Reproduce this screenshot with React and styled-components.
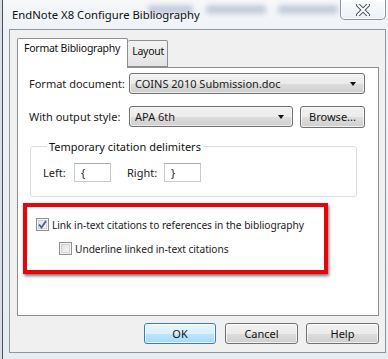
import React from 'react';
import styled, { createGlobalStyle } from 'styled-components';

const GlobalStyle = createGlobalStyle`
  html, body {
    margin: 0;
    padding: 0;
    width: 388px;
    height: 359px;
    overflow: hidden;
    background: #d9dee4;
  }
  * {
    box-sizing: border-box;
  }
`;

const Window = styled.div`
  position: relative;
  width: 388px;
  height: 359px;
  margin-left: 2px;
  border-left: 1px solid #4a4f56;
  background: linear-gradient(to bottom, #f6f8fa 0px, #eef2f6 30px, #e7ecf1 100%);
  font-family: 'Noto Sans', 'Open Sans', sans-serif;
  font-size: 11px;
  color: #1b1b1b;
  white-space: nowrap;
  display: flex;
  flex-direction: column;
`;

const TitleBar = styled.div`
  position: relative;
  height: 28px;
  display: flex;
  align-items: center;
  padding-left: 9px;
`;

// blurred desktop showing through the glass frame
const Smudge = styled.span`
  position: absolute;
  top: ${({ $t }) => $t}px;
  left: ${({ $l }) => $l}px;
  width: ${({ $w }) => $w}px;
  height: 9px;
  border-radius: 3px;
  background: #6f82a8;
  opacity: 0.35;
  filter: blur(2.5px);
`;

const Title = styled.span`
  position: relative;
  font-size: 11.3px;
  color: #111;
`;

const CloseButton = styled.div`
  position: absolute;
  top: 0;
  right: 4px;
  width: 46px;
  height: 20px;
  border: 1px solid #8c949e;
  border-top: none;
  border-radius: 0 0 5px 5px;
  background: linear-gradient(to bottom, rgba(255,255,255,0.5), rgba(235,239,244,0.8));
  box-shadow: inset 0 0 0 1px rgba(255,255,255,0.7);
  display: flex;
  align-items: center;
  justify-content: center;
`;

const Content = styled.div`
  margin: 1px 4px 0 6px;
  height: 324px;
  border: 1px solid #8e98a3;
  background: #f0f0f0;
  padding: 8px 6px 0 7px;
  display: flex;
  flex-direction: column;
`;

const TabRow = styled.div`
  display: flex;
  align-items: flex-end;
  height: 29px;
  position: relative;
  z-index: 1;
`;

const Tab = styled.div`
  height: ${({ $active }) => ($active ? '30px' : '27px')};
  margin-bottom: ${({ $active }) => ($active ? '-1px' : '0')};
  padding: ${({ $active }) => ($active ? '2px 7px 0 6px' : '3px 3px 0 4px')};
  border: 1px solid #8c8e94;
  border-bottom: ${({ $active }) => ($active ? 'none' : '1px solid #8c8e94')};
  border-left: ${({ $active }) => ($active ? '1px solid #8c8e94' : 'none')};
  border-radius: 2px 2px 0 0;
  background: ${({ $active }) =>
    $active ? '#ffffff' : 'linear-gradient(to bottom, #f3f3f3, #e3e3e3)'};
  font-size: 10.5px;
  letter-spacing: -0.25px;
  color: #111;
`;

const Pane = styled.div`
  height: 249px;
  border: 1px solid #8c8e94;
  background: #ffffff;
  padding: 5px 11px 0 11px;
  display: flex;
  flex-direction: column;
`;

const FieldRow = styled.div`
  display: flex;
  align-items: center;
  height: 21px;
  margin-bottom: ${({ $gap }) => $gap || 0}px;
`;

const Label = styled.span`
  width: 100px;
  flex-shrink: 0;
`;

const Combo = styled.div`
  width: ${({ $w }) => $w}px;
  height: ${({ $h }) => $h || 21}px;
  border: 1px solid #707070;
  border-radius: 3px;
  background: linear-gradient(to bottom, #f2f2f2 0%, #ebebeb 50%, #dddddd 51%, #cfcfcf 100%);
  box-shadow: inset 0 0 0 1px rgba(255, 255, 255, 0.6);
  display: flex;
  align-items: center;
  justify-content: space-between;
  padding: 0 8px 0 5px;
`;

const Arrow = styled.span`
  width: 0;
  height: 0;
  border-left: 3.5px solid transparent;
  border-right: 3.5px solid transparent;
  border-top: 4px solid #111;
`;

const Button = styled.div`
  width: ${({ $w }) => $w}px;
  height: ${({ $h }) => $h || 21}px;
  margin-left: ${({ $ml }) => $ml || 0}px;
  border: 1px solid ${({ $focus }) => ($focus ? '#3c7fb1' : '#707070')};
  border-radius: 3px;
  background: ${({ $focus }) =>
    $focus
      ? 'linear-gradient(to bottom, #eaf6fd 0%, #d9f0fc 50%, #bee6fd 51%, #a7d9f5 100%)'
      : 'linear-gradient(to bottom, #f2f2f2 0%, #ebebeb 50%, #dddddd 51%, #cfcfcf 100%)'};
  box-shadow: inset 0 0 0 1px rgba(255, 255, 255, 0.7);
  display: flex;
  align-items: center;
  justify-content: center;
  font-size: 11px;
  color: #111;
`;

const Group = styled.fieldset`
  margin: 12px 10px 0 1px;
  padding: 9px 0 0 12px;
  height: 58px;
  border: 1px solid #d5dfe5;
  border-radius: 3px;
  display: flex;
  align-items: flex-start;
`;

const Legend = styled.legend`
  margin-left: 4px;
  padding: 0 2px;
  font-size: 11px;
  color: #111;
`;

const DelimRow = styled.div`
  display: flex;
  align-items: center;
`;

const DelimLabel = styled.span`
  width: ${({ $w }) => $w}px;
`;

const DelimInput = styled.div`
  width: 37px;
  height: 19px;
  border: 1px solid #c5cbd2;
  border-top-color: #abadb3;
  background: #fff;
  padding: 1px 0 0 6px;
  margin-right: ${({ $mr }) => $mr || 0}px;
`;

const Highlight = styled.div`
  margin: 6px 0 0 -6px;
  width: 305px;
  height: 71px;
  border: 4px solid #e0070d;
  box-shadow: 1px 2px 3px rgba(0, 0, 0, 0.55), inset 0 0 1px rgba(0, 0, 0, 0.3);
  padding: 10px 0 0 9px;
  display: flex;
  flex-direction: column;
  gap: 9px;
`;

const CheckRow = styled.label`
  display: flex;
  align-items: center;
  height: 15px;
  gap: 3px;
  font-size: 10.2px;
  letter-spacing: -0.05px;
  padding-left: ${({ $indent }) => $indent || 0}px;
`;

const Box = styled.span`
  width: 13px;
  height: 13px;
  flex-shrink: 0;
  border: 1px solid #8e8f8f;
  background: linear-gradient(135deg, #dcdcdc, #fbfbfb);
  box-shadow: inset 0 0 0 1px #f4f4f4, inset 0 0 0 2px #cfd2d6;
  display: flex;
  align-items: center;
  justify-content: center;
`;

const ButtonBar = styled.div`
  display: flex;
  justify-content: flex-end;
  margin-top: 7px;
`;

const Check = () => (
  <svg width="9" height="9" viewBox="0 0 9 9">
    <path d="M1 4.5 L3.5 7.5 L8 1" fill="none" stroke="#4a5f97" strokeWidth="1.8" />
  </svg>
);

const CloseGlyph = () => (
  <svg width="14" height="12" viewBox="0 0 14 12">
    <path
      d="M2 1 L12 11 M12 1 L2 11"
      stroke="#4e5560"
      strokeWidth="4"
      strokeLinecap="round"
    />
    <path
      d="M2 1 L12 11 M12 1 L2 11"
      stroke="#ffffff"
      strokeWidth="2"
      strokeLinecap="round"
    />
  </svg>
);

const App = () => (
  <>
    <GlobalStyle />
    <Window>
      <TitleBar>
        <Smudge $t={5} $l={145} $w={45} />
        <Smudge $t={5} $l={203} $w={60} />
        <Smudge $t={5} $l={275} $w={60} />
        <Title>EndNote X8 Configure Bibliography</Title>
        <CloseButton>
          <CloseGlyph />
        </CloseButton>
      </TitleBar>
      <Content>
        <TabRow>
          <Tab $active>Format Bibliography</Tab>
          <Tab>Layout</Tab>
        </TabRow>
        <Pane>
          <FieldRow $gap={12}>
            <Label>Format document:</Label>
            <Combo $w={236}>
              <span>COINS 2010 Submission.doc</span>
              <Arrow />
            </Combo>
          </FieldRow>
          <FieldRow>
            <Label>With output style:</Label>
            <Combo $w={164}>
              <span>APA 6th</span>
              <Arrow />
            </Combo>
            <Button $w={65} $h={22} $ml={7}>Browse...</Button>
          </FieldRow>
          <Group>
            <Legend>Temporary citation delimiters</Legend>
            <DelimRow>
              <DelimLabel $w={31}>Left:</DelimLabel>
              <DelimInput $mr={16}>{'{'}</DelimInput>
              <DelimLabel $w={37}>Right:</DelimLabel>
              <DelimInput>{'}'}</DelimInput>
            </DelimRow>
          </Group>
          <Highlight>
            <CheckRow>
              <Box>
                <Check />
              </Box>
              Link in-text citations to references in the bibliography
            </CheckRow>
            <CheckRow $indent={23}>
              <Box />
              Underline linked in-text citations
            </CheckRow>
          </Highlight>
        </Pane>
        <ButtonBar>
          <Button $w={72} $focus>OK</Button>
          <Button $w={73} $ml={9}>Cancel</Button>
          <Button $w={73} $ml={8}>Help</Button>
        </ButtonBar>
      </Content>
    </Window>
  </>
);

export default App;
